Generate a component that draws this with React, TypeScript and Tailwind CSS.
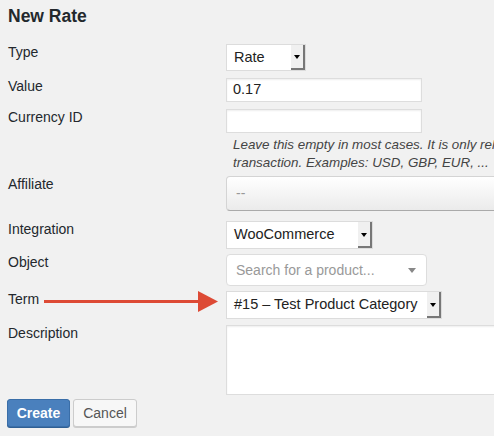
import React from "react";

function Row({ label, top, children, extra }: { label: string; top: string; children: React.ReactNode; extra?: React.ReactNode }) {
  return (
    <div className={`flex items-start ${top}`}>
      <div className="w-[218px] ml-2 shrink-0 flex items-start leading-[17px]">
        <span>{label}</span>
        {extra}
      </div>
      <div className="flex-1 min-w-0">{children}</div>
    </div>
  );
}

function NativeSelect({ value, width, height }: { value: string; width: string; height: string }) {
  return (
    <div className={`flex ${width} ${height} border border-[#dcdcdc] bg-white`}>
      <span className="flex-1 pl-[7px] flex items-center text-[14.5px] text-[#222] whitespace-nowrap overflow-hidden">{value}</span>
      <span className="w-[14px] flex items-center justify-center bg-[#f0f0f0] border-r-2 border-b-2 border-[#777]">
        <span className="w-0 h-0 border-l-[3.5px] border-r-[3.5px] border-t-[4px] border-l-transparent border-r-transparent border-t-black mt-[1px]" />
      </span>
    </div>
  );
}

export default function App() {
  return (
    <div className="w-[494px] h-[436px] overflow-hidden bg-[#f1f1f1] text-[14px] text-[#23282d] font-['Liberation_Sans',Arial,sans-serif]">
      <h2 className="pl-2 pt-[5px] text-[17.5px] leading-[23px] font-bold text-[#23282d]">New Rate</h2>

      <Row label="Type" top="mt-[16px]">
        <NativeSelect value="Rate" width="w-[80px]" height="h-[27px]" />
      </Row>

      <Row label="Value" top="mt-[7px]">
        <div className="w-[196px] h-[24px] border border-[#ddd] bg-white pl-[6px] flex items-center text-[14.5px] text-[#222] shadow-[inset_0_1px_2px_rgba(0,0,0,0.07)]">
          0.17
        </div>
      </Row>

      <Row label="Currency ID" top="mt-[7px]">
        <div className="w-[196px] h-[24px] border border-[#ddd] bg-white shadow-[inset_0_1px_2px_rgba(0,0,0,0.07)]" />
        <p className="mt-[3px] pl-[7px] text-[13.4px] leading-[18px] italic text-[#444] whitespace-nowrap">
          Leave this empty in most cases. It is only relevant for the
          <br />
          transaction. Examples: USD, GBP, EUR, ...
        </p>
      </Row>

      <Row label="Affiliate" top="mt-[4px]">
        <div className="w-[300px] h-[35px] rounded-[4px] border border-[#d4d4d4] border-b-[#aaa] bg-gradient-to-b from-white to-[#ebebeb] pl-[9px] flex items-center text-[#999] text-[14px]">
          --
        </div>
      </Row>

      <Row label="Integration" top="mt-[10px]">
        <NativeSelect value="WooCommerce" width="w-[147px]" height="h-[28px]" />
      </Row>

      <Row label="Object" top="mt-[5px]">
        <div className="w-[201px] h-[32px] rounded-[4px] border border-[#ddd] bg-white pl-[9px] pr-[10px] flex items-center justify-between">
          <span className="text-[#999] text-[14px]">Search for a product...</span>
          <span className="w-0 h-0 border-l-[4px] border-r-[4px] border-t-[5px] border-l-transparent border-r-transparent border-t-[#888]" />
        </div>
      </Row>

      <Row
        label="Term"
        top="mt-[5px]"
        extra={
          <svg width="174" height="21" viewBox="0 0 174 21" className="ml-[5px] shrink-0">
            <rect x="0" y="9" width="156" height="3" fill="#dd4a35" />
            <polygon points="154,0 174,10.5 154,21" fill="#dd4a35" />
          </svg>
        }
      >
        <NativeSelect value="#15 – Test Product Category" width="w-[216px]" height="h-[28px]" />
      </Row>

      <Row label="Description" top="mt-[6px]">
        <div className="w-[300px] h-[70px] border border-[#ddd] bg-white shadow-[inset_0_1px_2px_rgba(0,0,0,0.07)]" />
      </Row>

      <div className="flex gap-[3px] ml-[7px] mt-[4px]">
        <button className="w-[63px] h-[28px] rounded-[3px] bg-[#4a80bd] border border-[#3a6ea8] text-white font-bold text-[14px] shadow-[0_1px_0_#2f5f94]">
          Create
        </button>
        <button className="w-[64px] h-[28px] rounded-[3px] bg-[#f7f7f7] border border-[#ccc] text-[#555] text-[14px] shadow-[0_1px_0_#ccc]">
          Cancel
        </button>
      </div>
    </div>
  );
}
